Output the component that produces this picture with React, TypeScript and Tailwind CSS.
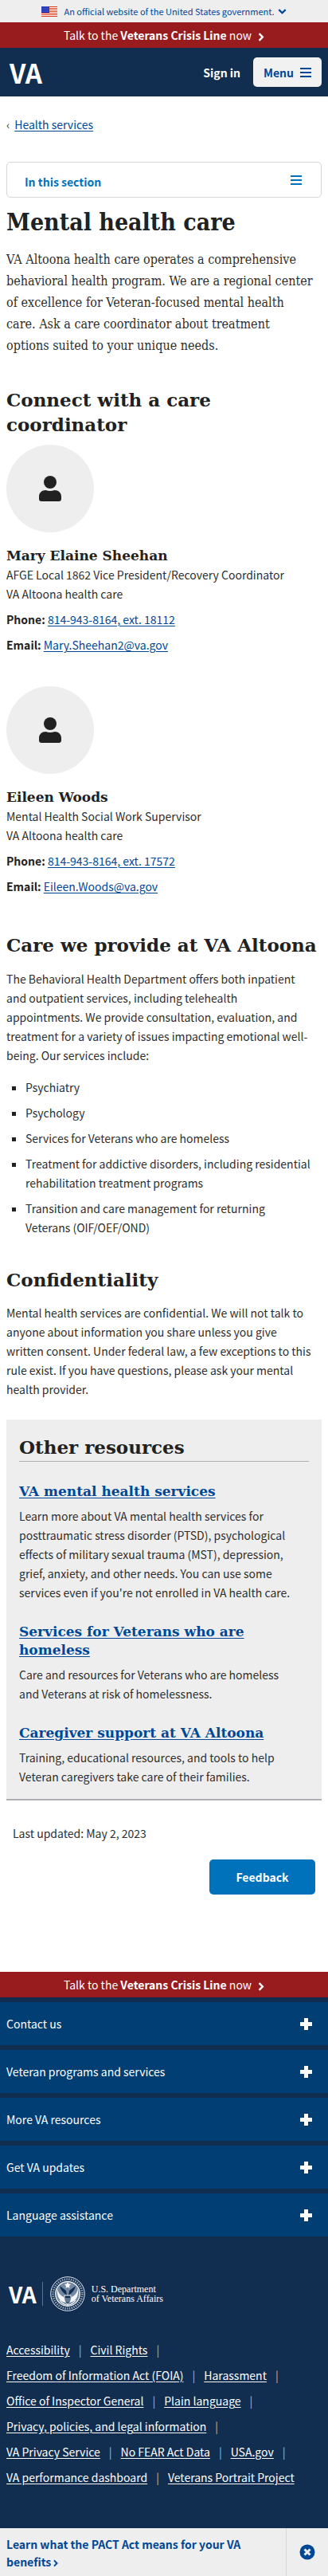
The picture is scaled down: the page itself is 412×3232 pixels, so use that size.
import React from "react";

const slabBold = "font-['DejaVu_Serif',serif] font-bold text-[#212121]";
const h2 = "font-['DejaVu_Serif',serif] text-[23px] leading-[31px] font-bold text-[#212121]";
const link = "text-[#004795] underline underline-offset-2";

function Bars({ className }: { className: string }) {
  return (
    <svg viewBox="0 0 14 12" className={className} fill="currentColor" aria-hidden="true">
      <rect width="14" height="2" />
      <rect y="5" width="14" height="2" />
      <rect y="10" width="14" height="2" />
    </svg>
  );
}

function Flag() {
  return (
    <svg viewBox="0 0 20 13" className="h-[13px] w-5" aria-hidden="true">
      <rect width="20" height="13" fill="#fff" />
      {[0, 2, 4, 6, 8, 10, 12].map((y) => (
        <rect key={y} y={y} width="20" height="1" fill="#db3e1f" />
      ))}
      <rect width="10" height="8" fill="#1e33b1" />
      {[1, 3, 5, 7].map((y) =>
        [1, 3, 5, 7, 9].map((x) => <circle key={`${x}-${y}`} cx={x} cy={y - 0.2} r="0.45" fill="#a9b4ee" />)
      )}
    </svg>
  );
}

function Chevron({ className, down }: { className: string; down?: boolean }) {
  return (
    <svg viewBox={down ? "0 0 12 8" : "0 0 8 12"} className={className} fill="none" stroke="currentColor" strokeWidth="2.6" aria-hidden="true">
      <path d={down ? "M1.2 1.3 6 6 10.8 1.3" : "M1.3 1.2 6 6 1.3 10.8"} />
    </svg>
  );
}

function CrisisLine() {
  return (
    <a href="#crisis" className="flex h-8 items-center justify-center gap-2 bg-[#981b1e] text-white">
      <span>
        Talk to the <strong>Veterans Crisis Line</strong> now
      </span>
      <Chevron className="mt-1 h-[11px] w-2" />
    </a>
  );
}

interface Person {
  name: string;
  role: string;
  ext: string;
  email: string;
}

const people: Person[] = [
  { name: "Mary Elaine Sheehan", role: "AFGE Local 1862 Vice President/Recovery Coordinator", ext: "18112", email: "Mary.Sheehan2@va.gov" },
  { name: "Eileen Woods", role: "Mental Health Social Work Supervisor", ext: "17572", email: "Eileen.Woods@va.gov" },
];

function PersonCard({ person }: { person: Person }) {
  return (
    <article>
      <div className="flex size-[110px] items-center justify-center rounded-full bg-[#eeeeee] text-[#212121]">
        <svg viewBox="0 0 28 32" className="h-8 w-7" fill="currentColor" aria-hidden="true">
          <circle cx="14" cy="8" r="8" />
          <path d="M8.500 18C10.300 18.600 12 19 14 19s3.700-.4 5.500-1C24.500 18 28 21.500 28 26v3c0 1.800-1.200 3-3 3H3c-1.800 0-3-1.200-3-3v-3c0-4.500 3.500-8 8.500-8Z" />
        </svg>
      </div>
      <h3 className={`${slabBold} mt-[18px] text-[17px] leading-[23px]`}>{person.name}</h3>
      <p>{person.role}</p>
      <p>VA Altoona health care</p>
      <p className="mt-2">
        <strong className="text-[#212121]">Phone:</strong>{" "}
        <a href="tel:8149438164" className={link}>814-943-8164, ext. {person.ext}</a>
      </p>
      <p className="mt-2">
        <strong className="text-[#212121]">Email:</strong>{" "}
        <a href={`mailto:${person.email}`} className={link}>{person.email}</a>
      </p>
    </article>
  );
}

const services = [
  "Psychiatry",
  "Psychology",
  "Services for Veterans who are homeless",
  "Treatment for addictive disorders, including residential rehabilitation treatment programs",
  "Transition and care management for returning Veterans (OIF/OEF/OND)",
];

const resources = [
  {
    title: "VA mental health services",
    text: "Learn more about VA mental health services for posttraumatic stress disorder (PTSD), psychological effects of military sexual trauma (MST), depression, grief, anxiety, and other needs. You can use some services even if you're not enrolled in VA health care.",
  },
  {
    title: "Services for Veterans who are homeless",
    text: "Care and resources for Veterans who are homeless and Veterans at risk of homelessness.",
  },
  {
    title: "Caregiver support at VA Altoona",
    text: "Training, educational resources, and tools to help Veteran caregivers take care of their families.",
  },
];

const accordion = ["Contact us", "Veteran programs and services", "More VA resources", "Get VA updates", "Language assistance"];

const footerLinks = [
  "Accessibility",
  "Civil Rights",
  "Freedom of Information Act (FOIA)",
  "Harassment",
  "Office of Inspector General",
  "Plain language",
  "Privacy, policies, and legal information",
  "VA Privacy Service",
  "No FEAR Act Data",
  "USA.gov",
  "VA performance dashboard",
  "Veterans Portrait Project",
];

function Seal() {
  return (
    <svg viewBox="0 0 44 44" className="size-11" fill="none" aria-hidden="true">
      <circle cx="22" cy="22" r="21.300" stroke="#dfe6ef" strokeWidth="1" />
      <circle cx="22" cy="22" r="18.300" stroke="#8fa0b7" strokeWidth="3" strokeDasharray="1.500 1.300" />
      <circle cx="22" cy="22" r="15.300" fill="#7488a3" stroke="#ffffff" strokeWidth="1.200" />
      <path d="M9 15c1 6 4 9 8 11l3 7-4-1c-5-2-8-8-7-17ZM35 15c-1 6-4 9-8 11l-3 7 4-1c5-2 8-8 7-17Z" fill="#f4f7fa" />
      <path d="M12 12c1 5 4 9 9 12l-1-6-4-3-4-3ZM32 12c-1 5-4 9-9 12l1-6 4-3 4-3Z" fill="#112e51" />
      <path d="m22 7 1.200 2.600 2.800.3-2 2 .5 2.800-2.500-1.300-2.500 1.300.5-2.800-2-2 2.800-.3L22 7Z" fill="#fff" />
      <path d="M18 24h8v5c0 3-2 4.500-4 6-2-1.500-4-3-4-6v-5Z" fill="#112e51" stroke="#fff" strokeWidth=".9" />
      <path d="M20 27v5M22 27v6M24 27v5" stroke="#dfe6ef" strokeWidth=".8" />
      <path d="M12 30c3 4 6 6 10 6s7-2 10-6" stroke="#fff" strokeWidth="1.200" />
    </svg>
  );
}

export default function App() {
  return (
    <div className="bg-white font-['Noto_Sans_CJK_SC','Open_Sans',sans-serif] text-sm leading-6 text-[#2e2e2e]">
      <button type="button" className="flex h-7 w-full items-center justify-center gap-2 bg-[#eeeeee] text-[11px] text-[#004795]">
        <Flag />
        <span>An official website of the United States government.</span>
        <Chevron down className="-ml-1 h-[7px] w-[11px]" />
      </button>
      <CrisisLine />
      <header className="flex h-[61px] items-center justify-between bg-[#112e51] pr-2 pl-3 text-white">
        <a href="#home" aria-label="VA home" className="text-[33px] leading-10 font-bold">VA</a>
        <div className="flex items-center gap-4 font-bold">
          <button type="button">Sign in</button>
          <button type="button" className="flex h-[37px] items-center gap-2 rounded-[5px] bg-[#f1f1f1] px-[13px] text-[#004795]">
            Menu
            <Bars className="h-3 w-[14px]" />
          </button>
        </div>
      </header>

      <main className="px-2">
        <nav aria-label="Breadcrumb" className="flex gap-[6px] pt-[23px]">
          <span aria-hidden="true">‹</span>
          <a href="#services" className={link}>Health services</a>
        </nav>
        <button type="button" className="mt-[35px] flex h-[45px] w-full items-center justify-between rounded-[5px] border border-[#d6d7d9] pr-6 pl-[22px] font-bold text-[#0071bb]">
          <span className="pt-1">In this section</span>
          <Bars className="h-3 w-[14px]" />
        </button>

        <h1 className="mt-[11px] font-['DejaVu_Serif_Condensed','DejaVu_Serif',serif] text-[30px] leading-[39px] font-bold text-[#212121]">
          Mental health care
        </h1>
        <p className="mt-[14px] font-['DejaVu_Serif_Condensed','DejaVu_Serif',serif] text-base leading-[27px]">
          VA Altoona health care operates a comprehensive behavioral health program. We are a regional center of
          excellence for Veteran-focused mental health <br />
          care. Ask a care coordinator about treatment <br />
          options suited to your unique needs.
        </p>

        <h2 className={`${h2} mt-[39px] pr-3`}>Connect with a care coordinator</h2>
        <div className="mt-[10px] flex flex-col gap-10">
          {people.map((p) => (
            <PersonCard key={p.name} person={p} />
          ))}
        </div>

        <h2 className={`${h2} mt-[46px]`}>Care we provide at VA Altoona</h2>
        <p className="mt-[15px] pr-3">
          The Behavioral Health Department offers both inpatient and outpatient services, including telehealth
          appointments. We provide consultation, evaluation, and treatment for a variety of issues impacting emotional
          well-being. Our services include:
        </p>
        <ul className="mt-4 flex flex-col gap-2 pr-3">
          {services.map((s) => (
            <li key={s} className="flex gap-3 pl-[7px]">
              <span className="mt-[11px] size-[5px] shrink-0 bg-[#212121]" />
              {s}
            </li>
          ))}
        </ul>

        <h2 className={`${h2} mt-[38px]`}>Confidentiality</h2>
        <p className="mt-[14px] pr-3">
          Mental health services are confidential. We will not talk to anyone about information you share unless you
          give written consent. Under federal law, a few exceptions to this rule exist. If you have questions, please
          ask your mental health provider.
        </p>

        <section className="mt-[26px] border-b-2 border-[#aeb0b5] bg-[#eeeeee] px-4 pt-[19px] pb-4">
          <h2 className={`${h2} border-b border-[#aeb0b5] pb-[2px]`}>Other resources</h2>
          {resources.map((r) => (
            <div key={r.title} className="mt-[26px] pr-4">
              <h3 className={`${slabBold} text-[17px] leading-[23px]`}>
                <a href="#resource" className={link}>{r.title}</a>
              </h3>
              <p className="mt-[7px]">{r.text}</p>
            </div>
          ))}
        </section>

        <p className="mt-[29px] px-2">Last updated: May 2, 2023</p>
        <div className="mt-[21px] flex justify-end pr-2">
          <button type="button" className="h-11 w-[133px] rounded-[5px] bg-[#0071bb] font-bold text-white">Feedback</button>
        </div>
      </main>

      <footer className="mt-[97px] bg-[#112e51] text-white">
        <CrisisLine />
        <ul className="flex flex-col gap-[6px] pt-[6px]">
          {accordion.map((a) => (
            <li key={a}>
              <button type="button" className="flex h-[54px] w-full items-center justify-between bg-[#003e73] pr-5 pl-2">
                {a}
                <svg viewBox="0 0 15 15" className="size-[15px]" fill="currentColor" aria-hidden="true">
                  <path d="M5 0h5v5h5v5h-5v5H5v-5H0V5h5Z" />
                </svg>
              </button>
            </li>
          ))}
        </ul>
        <div className="flex items-center pt-[50px] pl-[11px]">
          <span className="text-[28px] leading-[44px] font-bold">VA</span>
          <span className="ml-[7px] h-[30px] w-px bg-[#5b7394]" />
          <span className="ml-[9px]">
            <Seal />
          </span>
          <span className="ml-2 font-['Liberation_Serif',serif] text-xs leading-[12px]">
            U.S. Department
            <br />
            of Veterans Affairs
          </span>
        </div>
        <ul className="flex flex-wrap px-2 pt-[32px] pb-12 leading-8">
          {footerLinks.map((l, i) => (
            <li key={l} className="flex">
              <a href="#footer" className="underline underline-offset-2">{l}</a>
              {i < footerLinks.length - 1 && <span className="px-[11px] text-[#aeb9c8]">|</span>}
            </li>
          ))}
        </ul>
      </footer>

      <aside className="flex h-[60px] bg-[#eeeeee] font-bold text-[#004795]">
        <a href="#pact" className="flex-1 pt-[9px] pr-10 pl-2 leading-[22px]">
          Learn what the PACT Act means for your VA benefits <Chevron className="inline h-[10px] w-[6px]" />
        </a>
        <div className="flex w-[53px] items-center justify-center border-l border-[#d6d7d9]">
          <button type="button" aria-label="Close">
            <svg viewBox="0 0 20 20" className="size-5" aria-hidden="true">
              <circle cx="10" cy="10" r="9.500" fill="#004795" />
              <path d="m6.500 6.500 7 7m0-7-7 7" stroke="#eee" strokeWidth="3" />
            </svg>
          </button>
        </div>
      </aside>
    </div>
  );
}
